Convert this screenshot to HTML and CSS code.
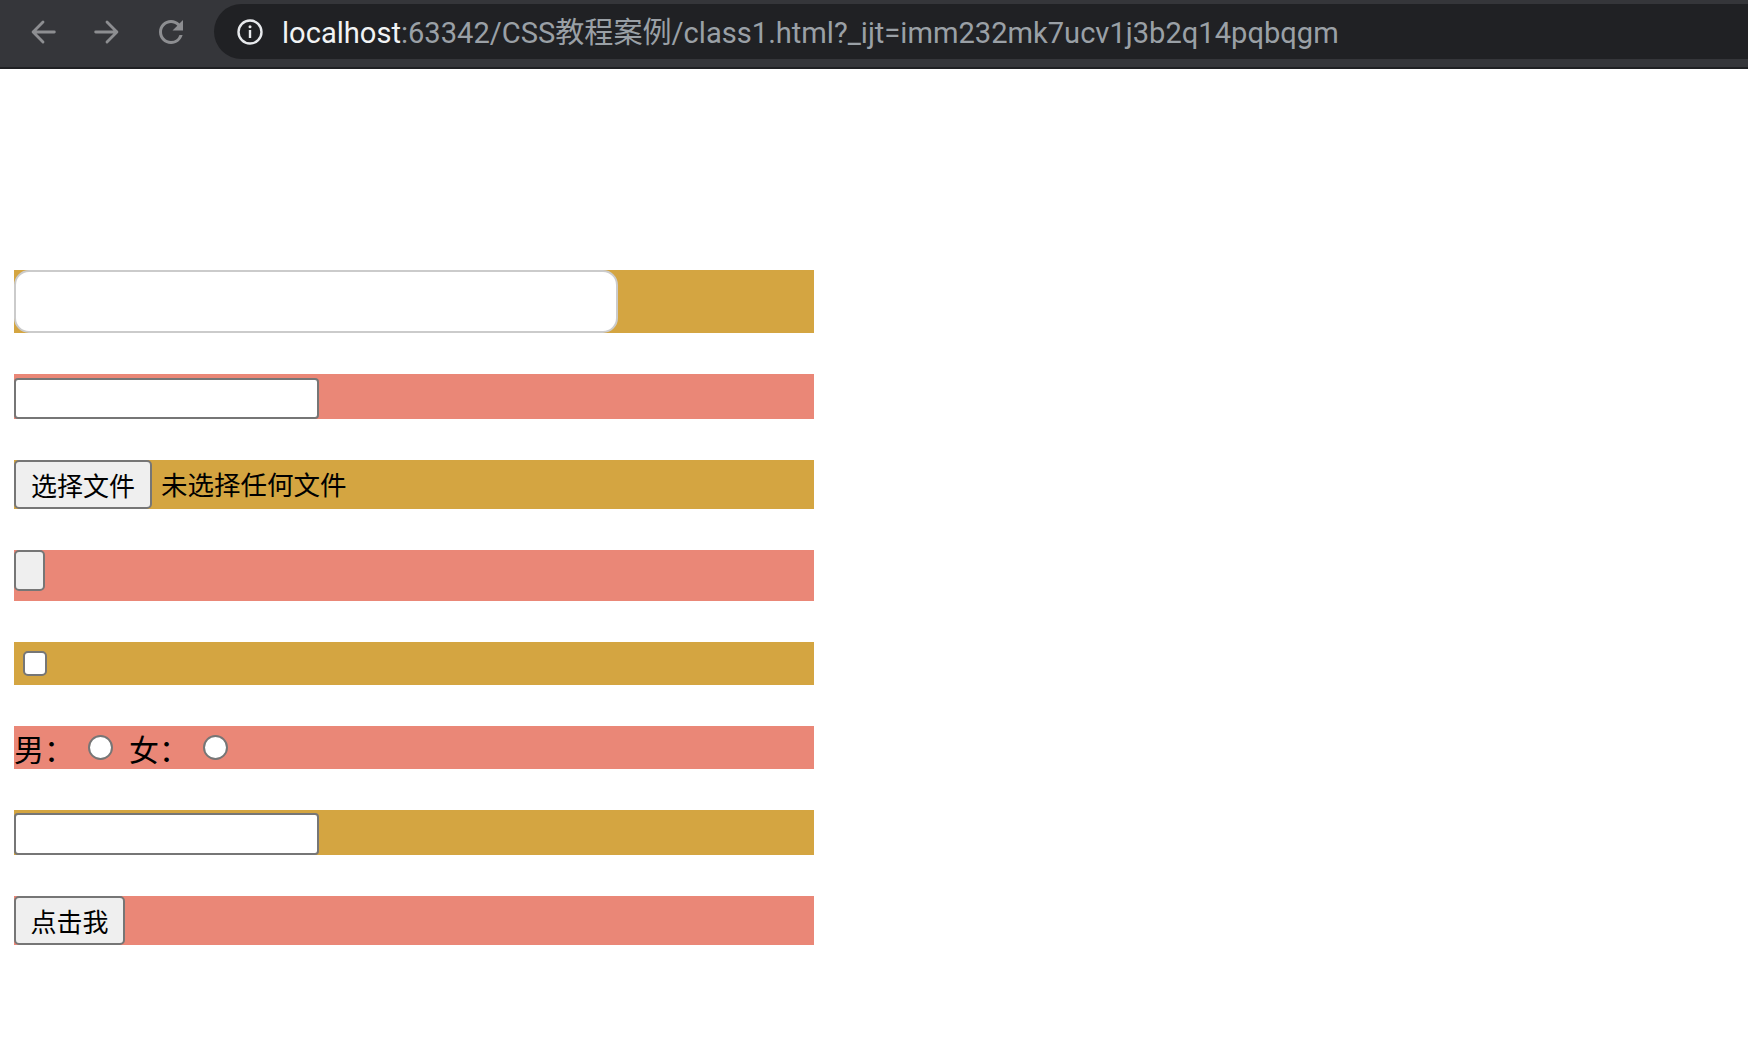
FILE: index.html
```html
<!DOCTYPE html>
<html lang="zh-CN">
<head>
<meta charset="utf-8">
<title>class1</title>
<link rel="stylesheet" href="styles.css">
</head>
<body>
<header class="browser-bar">
  <nav class="nav">
    <span class="nav-btn">
      <svg viewBox="0 0 24 24" width="34" height="34"><path d="M20 12H5M12 5l-7 7 7 7" fill="none" stroke="#8d8e91" stroke-width="2" stroke-linecap="round" stroke-linejoin="round"/></svg>
    </span>
    <span class="nav-btn">
      <svg viewBox="0 0 24 24" width="34" height="34"><path d="M4 12h15M12 5l7 7-7 7" fill="none" stroke="#8d8e91" stroke-width="2" stroke-linecap="round" stroke-linejoin="round"/></svg>
    </span>
    <span class="nav-btn">
      <svg viewBox="0 0 24 24" width="36" height="36"><path d="M17.65 6.35A7.958 7.958 0 0 0 12 4c-4.420 0-7.99 3.58-7.99 8s3.570 8 7.99 8c3.73 0 6.84-2.55 7.73-6h-2.08A5.99 5.99 0 0 1 12 18c-3.31 0-6-2.69-6-6s2.69-6 6-6c1.66 0 3.14.69 4.22 1.78L13 11h7V4l-2.35 2.35z" fill="#8d8e91"/></svg>
    </span>
  </nav>
  <div class="omnibox">
    <svg class="info" viewBox="0 0 26 26" width="26" height="26"><circle cx="13" cy="13" r="11.5" fill="none" stroke="#e8eaed" stroke-width="2.4"/><rect x="11.8" y="11" width="2.4" height="8" fill="#e8eaed"/><circle cx="13" cy="7.8" r="1.5" fill="#e8eaed"/></svg>
    <span class="url"><span class="host">localhost</span>:63342/CSS教程案例/class1.html?_ijt=imm232mk7ucv1j3b2q14pqbqgm</span>
  </div>
</header>

<main class="form">
  <div class="row gold r1"><input class="big-input" type="text"></div>
  <div class="row salmon r2"><input class="text-input" type="text"></div>
  <div class="row gold r3"><button class="btn file-btn" type="button">选择文件</button><span class="file-label">未选择任何文件</span></div>
  <div class="row salmon r4"><button class="btn empty-btn" type="button"></button></div>
  <div class="row gold r5"><input class="check" type="checkbox"></div>
  <div class="row salmon r6"><span class="lbl">男：</span><input class="radio" type="radio" name="sex"><span class="lbl">女：</span><input class="radio" type="radio" name="sex"></div>
  <div class="row gold r7"><input class="text-input tall" type="text"></div>
  <div class="row salmon r8"><button class="btn click-btn" type="button">点击我</button></div>
</main>
</body>
</html>
```

FILE: styles.css
```css
html, body {
  margin: 0;
  padding: 0;
  background: #ffffff;
}

body {
  font-family: "Noto Sans CJK SC", "Noto Sans", sans-serif;
  color: #000;
  overflow: hidden;
}

/* ---------- browser chrome ---------- */
.browser-bar {
  height: 67px;
  background: #35363a;
  border-bottom: 2px solid #1f2023;
  display: flex;
  align-items: flex-start;
}

.nav {
  display: flex;
  align-items: center;
  gap: 28px;
  padding-left: 25px;
  height: 63px;
}

.nav-btn {
  width: 36px;
  height: 36px;
  display: flex;
  align-items: center;
  justify-content: center;
}

.omnibox {
  flex: 1;
  margin-top: 4px;
  margin-left: 25px;
  height: 55px;
  background: #202124;
  border-radius: 28px 0 0 28px;
  display: flex;
  align-items: center;
  padding-left: 23px;
}

.info {
  flex: none;
  margin-top: 1px;
}

.url {
  margin-left: 19px;
  margin-bottom: 3px;
  font-family: Roboto, "Noto Sans CJK SC", sans-serif;
  font-size: 29.1px;
  color: #9aa0a6;
  white-space: nowrap;
}

.host {
  color: #f1f3f4;
}

/* ---------- form rows ---------- */
.form {
  display: flex;
  flex-direction: column;
  gap: 41px;
  padding-top: 201px;
  padding-left: 14px;
}

.row {
  width: 800px;
  display: flex;
  align-items: center;
}

.gold { background: #d4a541; }
.salmon { background: #ea8777; }

.r1 { height: 63px; }
.r2 { height: 45px; align-items: flex-end; }
.r3 { height: 49px; }
.r4 { height: 51px; align-items: flex-start; }
.r5 { height: 43px; }
.r6 { height: 43px; }
.r7 { height: 45px; align-items: flex-end; }
.r8 { height: 49px; }

.big-input {
  appearance: none;
  box-sizing: border-box;
  width: 604px;
  height: 63px;
  margin: 0;
  border: 2px solid #cbcbcb;
  border-radius: 15px;
  background: #fff;
  outline: none;
}

.text-input {
  appearance: none;
  box-sizing: border-box;
  width: 305px;
  height: 41px;
  margin: 0;
  border: 2px solid #767676;
  border-radius: 4px;
  background: #fff;
  outline: none;
}

.text-input.tall { height: 42px; }

.btn {
  appearance: none;
  box-sizing: border-box;
  margin: 0;
  padding: 0 14px;
  height: 49px;
  background: #efefef;
  border: 2px solid #767676;
  border-radius: 5px;
  font-family: "Noto Sans CJK SC", sans-serif;
  font-size: 26px;
  color: #000;
  line-height: 1;
  white-space: nowrap;
}

.file-btn { width: 138px; }
.click-btn { width: 111px; }

.empty-btn {
  width: 31px;
  height: 41px;
  padding: 0;
}

.file-label {
  margin-left: 9px;
  font-size: 26.5px;
  line-height: 1;
}

.check {
  appearance: none;
  box-sizing: border-box;
  width: 24px;
  height: 25px;
  margin: 0 0 0 9px;
  background: #fff;
  border: 2px solid #767676;
  border-radius: 5px;
}

.lbl {
  font-size: 30px;
  line-height: 1;
}

.radio {
  appearance: none;
  box-sizing: border-box;
  width: 25px;
  height: 25px;
  margin: 0 16px 0 14px;
  background: #fff;
  border: 2px solid #767676;
  border-radius: 50%;
}
```
